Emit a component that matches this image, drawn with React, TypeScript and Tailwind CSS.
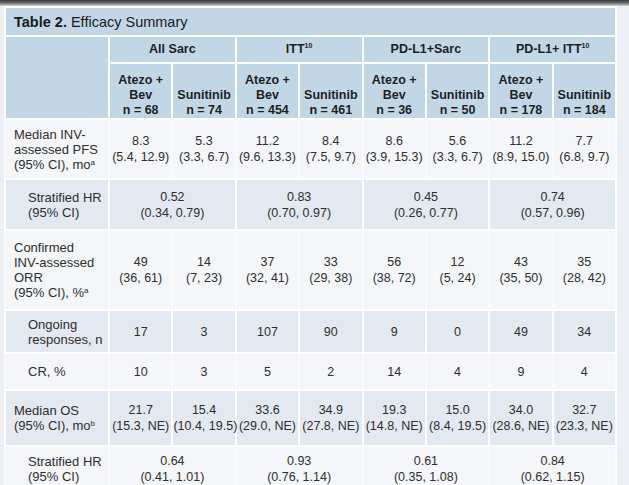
import React from "react";

type Row = {
  label: React.ReactNode;
  indent?: boolean;
  shaded?: boolean;
  h: string;
  cells?: [string, string?][];
  spans?: [string, string][];
};

const groups: React.ReactNode[] = [
  "All Sarc",
  <>ITT<sup className="text-[7px] top-[-0.7em]">10</sup></>,
  "PD-L1+Sarc",
  <>PD-L1+ ITT<sup className="text-[7px] top-[-0.7em]">10</sup></>,
];

const arms = ["68", "74", "454", "461", "36", "50", "178", "184"];

const rows: Row[] = [
  {
    label: (
      <>
        Median INV-
        <br />
        assessed PFS
        <br />
        (95% CI), mo<sup className="text-[8px]">a</sup>
      </>
    ),
    h: "h-[60px]",
    cells: [
      ["8.3", "(5.4, 12.9)"],
      ["5.3", "(3.3, 6.7)"],
      ["11.2", "(9.6, 13.3)"],
      ["8.4", "(7.5, 9.7)"],
      ["8.6", "(3.9, 15.3)"],
      ["5.6", "(3.3, 6.7)"],
      ["11.2", "(8.9, 15.0)"],
      ["7.7", "(6.8, 9.7)"],
    ],
  },
  {
    label: (
      <>
        Stratified HR
        <br />
        (95% CI)
      </>
    ),
    indent: true,
    shaded: true,
    h: "h-[51px]",
    spans: [
      ["0.52", "(0.34, 0.79)"],
      ["0.83", "(0.70, 0.97)"],
      ["0.45", "(0.26, 0.77)"],
      ["0.74", "(0.57, 0.96)"],
    ],
  },
  {
    label: (
      <>
        Confirmed
        <br />
        INV-assessed
        <br />
        ORR
        <br />
        (95% CI), %<sup className="text-[8px]">a</sup>
      </>
    ),
    h: "h-[80px]",
    cells: [
      ["49", "(36, 61)"],
      ["14", "(7, 23)"],
      ["37", "(32, 41)"],
      ["33", "(29, 38)"],
      ["56", "(38, 72)"],
      ["12", "(5, 24)"],
      ["43", "(35, 50)"],
      ["35", "(28, 42)"],
    ],
  },
  {
    label: (
      <>
        Ongoing
        <br />
        responses, n
      </>
    ),
    indent: true,
    shaded: true,
    h: "h-[43px]",
    cells: [["17"], ["3"], ["107"], ["90"], ["9"], ["0"], ["49"], ["34"]],
  },
  {
    label: "CR, %",
    indent: true,
    h: "h-[37px]",
    cells: [["10"], ["3"], ["5"], ["2"], ["14"], ["4"], ["9"], ["4"]],
  },
  {
    label: (
      <>
        Median OS
        <br />
        (95% CI), mo<sup className="text-[8px]">b</sup>
      </>
    ),
    shaded: true,
    h: "h-[56px]",
    cells: [
      ["21.7", "(15.3, NE)"],
      ["15.4", "(10.4, 19.5)"],
      ["33.6", "(29.0, NE)"],
      ["34.9", "(27.8, NE)"],
      ["19.3", "(14.8, NE)"],
      ["15.0", "(8.4, 19.5)"],
      ["34.0", "(28.6, NE)"],
      ["32.7", "(23.3, NE)"],
    ],
  },
  {
    label: (
      <>
        Stratified HR
        <br />
        (95% CI)
      </>
    ),
    indent: true,
    h: "h-[46px]",
    spans: [
      ["0.64", "(0.41, 1.01)"],
      ["0.93", "(0.76, 1.14)"],
      ["0.61", "(0.35, 1.08)"],
      ["0.84", "(0.62, 1.15)"],
    ],
  },
];

function Value({ v }: { v: [string, string?] }) {
  return (
    <>
      <div className="leading-[16px]">{v[0]}</div>
      {v[1] && <div className="whitespace-nowrap leading-[16px]">{v[1]}</div>}
    </>
  );
}

export default function App() {
  const cell = "border-2 text-center align-middle text-[12.5px] text-[#2e2e2e] px-0";
  return (
    <div className="w-[629px] h-[485px] overflow-hidden bg-[#eceff3] font-['Liberation_Sans',Arial,sans-serif]">
      <div className="h-[6px] bg-gradient-to-b from-[#3a3a3a] via-[#6b6b6b] to-[#d4d8dc]" />
      <div className="pl-[4px]">
        <table className="table-fixed border-collapse w-[613px]">
          <colgroup>
            <col className="w-[104px]" />
            {arms.map((a) => (
              <col key={a} />
            ))}
          </colgroup>
          <thead>
            <tr className="h-[29px] bg-[#c2d7e6]">
              <th colSpan={9} className="border-2 border-white text-left align-middle pl-[8px] pt-[2px] text-[14.5px] font-normal text-[#1a1a1a]">
                <span className="font-bold">Table 2.</span> Efficacy Summary
              </th>
            </tr>
            <tr className="h-[27px] bg-[#c2d7e6]">
              <th className="border-2 border-white" rowSpan={2} />
              {groups.map((g, i) => (
                <th key={i} colSpan={2} className="border-2 border-white text-center align-middle text-[12.5px] font-bold text-[#1f1f1f]">
                  {g}
                </th>
              ))}
            </tr>
            <tr className="h-[56px] bg-[#c2d7e6]">
              {arms.map((n, i) => (
                <th key={i} className="border-2 border-white text-center align-bottom pb-0 text-[12.5px] font-bold text-[#1f1f1f]">
                  {i % 2 === 0 ? (
                    <>
                      <div className="leading-[15px]">Atezo +</div>
                      <div className="leading-[15px]">Bev</div>
                    </>
                  ) : (
                    <div className="leading-[15px]">Sunitinib</div>
                  )}
                  <div className="whitespace-nowrap leading-[15px]">n = {n}</div>
                </th>
              ))}
            </tr>
          </thead>
          <tbody>
            {rows.map((r, i) => {
              const edge = r.shaded ? "border-white" : "border-white border-x-[#fafbfc]";
              return (
                <tr key={i} className={`${r.h} ${r.shaded ? "bg-[#e2e9f0]" : "bg-[#f4f6f9]"}`}>
                  <td
                    className={`border-2 ${edge} align-middle text-left text-[13px] text-[#2e2e2e] ${
                      r.indent ? "pl-[22px]" : "pl-[8px]"
                    }`}
                  >
                    <div className="leading-[15px]">{r.label}</div>
                  </td>
                  {r.cells?.map((c, j) => (
                    <td key={j} className={`${cell} ${edge}`}>
                      <Value v={c} />
                    </td>
                  ))}
                  {r.spans?.map((c, j) => (
                    <td key={j} colSpan={2} className={`${cell} ${edge}`}>
                      <Value v={c} />
                    </td>
                  ))}
                </tr>
              );
            })}
          </tbody>
        </table>
      </div>
    </div>
  );
}
